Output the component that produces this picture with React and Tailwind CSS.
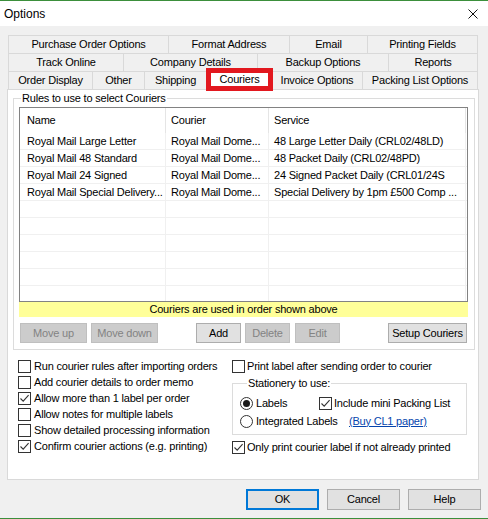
import React from "react";

function Check({ checked }) {
  return (
    <span className="w-[13px] h-[13px] border border-[#333333] bg-white flex items-center justify-center shrink-0">
      {checked && (
        <svg width="11" height="11" viewBox="0 0 11 11">
          <path d="M1.5 5.5 L4.2 8.2 L9.6 2.2" fill="none" stroke="#333333" strokeWidth="1.1" />
        </svg>
      )}
    </span>
  );
}

function Radio({ on }) {
  return (
    <span className="w-[13px] h-[13px] rounded-full border border-[#333333] bg-white flex items-center justify-center shrink-0">
      {on && <span className="w-[7px] h-[7px] rounded-full bg-[#1a1a1a]" />}
    </span>
  );
}

function Btn({ children, w, disabled, className = "" }) {
  return (
    <div
      className={`${w} h-[20px] border flex items-center justify-center shrink-0 ${
        disabled
          ? "bg-[#cccccc] border-[#bfbfbf] text-[#838383]"
          : "bg-[#e1e1e1] border-[#adadad] text-black"
      } ${className}`}
    >
      {children}
    </div>
  );
}

const row1 = [
  ["Purchase Order Options", "w-[160px]"],
  ["Format Address", "w-[121px]"],
  ["Email", "w-[78px]"],
  ["Printing Fields", "w-[111px]"],
];
const row2 = [
  ["Track Online", "w-[115px]"],
  ["Company Details", "w-[134px]"],
  ["Backup Options", "w-[131px]"],
  ["Reports", "w-[90px]"],
];
const row3 = [
  ["Order Display", "w-[84px]"],
  ["Other", "w-[52px]"],
  ["Shipping", "w-[62px]"],
  ["Couriers", "w-[65px]", true],
  ["Invoice Options", "w-[91px]"],
  ["Packing List Options", "w-[116px]"],
];

function TabRow({ tabs }) {
  return (
    <div className="flex h-[18px]">
      {tabs.map(([label, w, sel], i) => (
        <div
          key={label}
          className={`${w} h-[18px] relative border-t border-l border-[#d9d9d9] ${
            i === tabs.length - 1 ? "border-r" : ""
          } flex items-center justify-center bg-[#f0f0f0]`}
        >
          {sel ? (
            <div className="absolute -left-[1px] -right-[2px] -top-[4px] -bottom-[2px] z-10 border-[5px] border-[#e2181f] bg-white flex items-center justify-center">
              {label}
            </div>
          ) : (
            label
          )}
        </div>
      ))}
    </div>
  );
}

const rows = [
  ["Royal Mail Large Letter", "Royal Mail Dome...", "48 Large Letter Daily (CRL02/48LD)"],
  ["Royal Mail 48 Standard", "Royal Mail Dome...", "48 Packet Daily (CRL02/48PD)"],
  ["Royal Mail 24 Signed", "Royal Mail Dome...", "24 Signed Packet Daily (CRL01/24S"],
  ["Royal Mail Special Delivery...", "Royal Mail Dome...", "Special Delivery by 1pm £500 Comp ..."],
  ["", "", ""],
  ["", "", ""],
  ["", "", ""],
  ["", "", ""],
  ["", "", ""],
  ["", "", ""],
];

export default function App() {
  return (
    <div className="w-[488px] h-[519px] bg-[#f0f0f0] border-t border-b border-[#3b8f3b] flex flex-col font-['Liberation_Sans',Arial,sans-serif] text-[11px] tracking-[-0.2px] text-black overflow-hidden">
      {/* Title bar */}
      <div className="h-[25px] bg-white flex items-center justify-between pl-[4px] pr-[10px] shrink-0">
        <span className="text-[12px] tracking-normal">Options</span>
        <svg width="10" height="10" viewBox="0 0 10 10">
          <path d="M0.5 0.5 L9.5 9.5 M9.5 0.5 L0.5 9.5" stroke="#111" strokeWidth="1" />
        </svg>
      </div>

      {/* Tabs */}
      <div className="ml-[8px] mt-[9px] w-[470px] flex flex-col shrink-0">
        <TabRow tabs={row1} />
        <TabRow tabs={row2} />
        <TabRow tabs={row3} />
      </div>

      {/* Panel */}
      <div className="ml-[7px] w-[472px] h-[391px] border border-[#d9d9d9] bg-white shrink-0 flex flex-col">
        <fieldset className="ml-[5px] mt-[1px] w-[462px] border border-[#dcdcdc] pb-[6px]">
          <legend className="ml-[7px] px-[1px] leading-[14px]">Rules to use to select Couriers</legend>
          <div className="ml-[5px] mt-[2px] w-[449px] h-[195px] border border-[#828282] overflow-hidden flex flex-col">
            <div className="h-[25px] flex shrink-0">
              <div className="w-[146px] border-r border-[#e5e5e5] pl-[7px] flex items-center">Name</div>
              <div className="w-[103px] border-r border-[#e5e5e5] pl-[5px] flex items-center">Courier</div>
              <div className="w-[197px] border-r border-[#e5e5e5] pl-[5px] flex items-center">Service</div>
            </div>
            {rows.map((r, i) => (
              <div key={i} className="h-[17px] flex shrink-0 border-b border-[#f0f0f0]">
                <div className="w-[146px] border-r border-[#f0f0f0] pl-[7px] flex items-center whitespace-nowrap overflow-hidden">{r[0]}</div>
                <div className="w-[103px] border-r border-[#f0f0f0] pl-[5px] flex items-center whitespace-nowrap overflow-hidden">{r[1]}</div>
                <div className="w-[197px] border-r border-[#f0f0f0] pl-[5px] flex items-center whitespace-nowrap overflow-hidden">{r[2]}</div>
              </div>
            ))}
          </div>
          <div className="ml-[5px] w-[449px] h-[15px] bg-[#ffff99] flex items-center justify-center">
            Couriers are used in order shown above
          </div>
          <div className="mt-[6px] flex">
            <Btn w="w-[67px]" disabled className="ml-[6px]">Move up</Btn>
            <Btn w="w-[67px]" disabled className="ml-[4px]">Move down</Btn>
            <Btn w="w-[45px]" className="ml-[38px]">Add</Btn>
            <Btn w="w-[45px]" disabled className="ml-[4px]">Delete</Btn>
            <Btn w="w-[45px]" disabled className="ml-[5px]">Edit</Btn>
            <Btn w="w-[79px]" className="ml-[48px]">Setup Couriers</Btn>
          </div>
        </fieldset>

        <div className="mt-[8px] flex">
          <div className="ml-[10px] w-[214px] flex flex-col">
            {[
              ["Run courier rules after importing orders", false],
              ["Add courier details to order memo", false],
              ["Allow more than 1 label per order", true],
              ["Allow notes for multiple labels", false],
              ["Show detailed processing information", false],
              ["Confirm courier actions (e.g. printing)", true],
            ].map(([t, c]) => (
              <div key={t} className="h-[16px] flex items-center gap-[3px] whitespace-nowrap">
                <Check checked={c} />
                <span>{t}</span>
              </div>
            ))}
          </div>
          <div className="flex flex-col w-[235px]">
            <div className="h-[16px] flex items-center gap-[2px] whitespace-nowrap">
              <Check checked={false} />
              <span>Print label after sending order to courier</span>
            </div>
            <fieldset className="mt-[2px] w-[235px] border border-[#dcdcdc] pt-[5px] pb-[5px] pl-[7px]">
              <legend className="ml-[7px] px-[1px] leading-[14px]">Stationery to use:</legend>
              <div className="h-[16px] flex items-center whitespace-nowrap">
                <div className="w-[79px] flex items-center gap-[3px]">
                  <Radio on />
                  <span>Labels</span>
                </div>
                <div className="flex items-center gap-[2px]">
                  <Check checked />
                  <span>Include mini Packing List</span>
                </div>
              </div>
              <div className="mt-[2px] h-[16px] flex items-center whitespace-nowrap">
                <div className="w-[109px] flex items-center gap-[3px]">
                  <Radio on={false} />
                  <span>Integrated Labels</span>
                </div>
                <span className="text-[#0645ad] underline">(Buy CL1 paper)</span>
              </div>
            </fieldset>
            <div className="mt-[4px] h-[16px] flex items-center gap-[2px] whitespace-nowrap">
              <Check checked />
              <span>Only print courier label if not already printed</span>
            </div>
          </div>
        </div>
      </div>

      {/* Bottom buttons */}
      <div className="mt-[9px] flex justify-end gap-[8px] pr-[7px] shrink-0">
        <div className="w-[73px] h-[21px] bg-[#e1e1e1] border-2 border-[#0078d7] flex items-center justify-center">OK</div>
        <div className="w-[73px] h-[21px] bg-[#e1e1e1] border border-[#adadad] flex items-center justify-center">Cancel</div>
        <div className="w-[73px] h-[21px] bg-[#e1e1e1] border border-[#adadad] flex items-center justify-center">Help</div>
      </div>
    </div>
  );
}
